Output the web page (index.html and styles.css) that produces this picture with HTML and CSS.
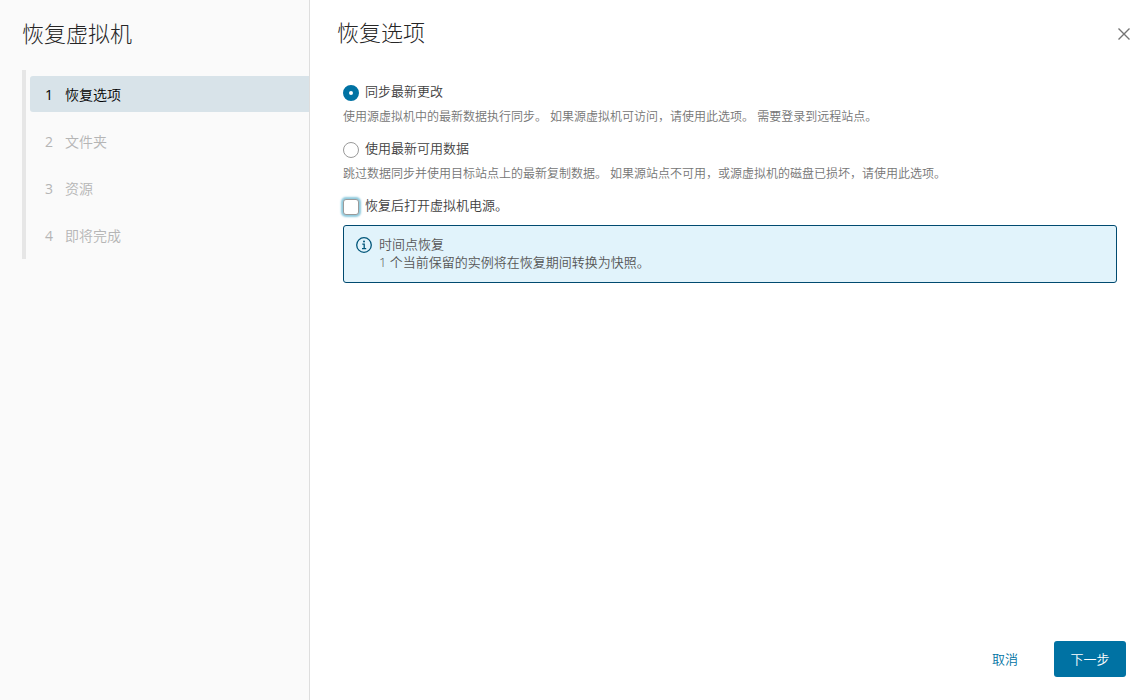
FILE: index.html
```html
<!DOCTYPE html>
<html lang="zh-CN">
<head>
<meta charset="utf-8">
<meta name="viewport" content="width=device-width, initial-scale=1">
<title>恢复虚拟机</title>
<link rel="stylesheet" href="styles.css">
</head>
<body>
<div class="wizard">
  <aside class="sidebar">
    <h1 class="title">恢复虚拟机</h1>
    <ol class="steps">
      <li><button type="button" class="step step-current" aria-current="step"><span class="step-number">1</span>恢复选项</button></li>
      <li><button type="button" class="step" disabled><span class="step-number">2</span>文件夹</button></li>
      <li><button type="button" class="step" disabled><span class="step-number">3</span>资源</button></li>
      <li><button type="button" class="step" disabled><span class="step-number">4</span>即将完成</button></li>
    </ol>
  </aside>
  <main class="content">
    <header class="header">
      <h2 class="title">恢复选项</h2>
      <button type="button" class="close" aria-label="关闭">
        <svg class="close-icon" viewBox="0 0 12 12" aria-hidden="true"><path d="M0.5 0.5L11.5 11.5M11.5 0.5L0.5 11.5"/></svg>
      </button>
    </header>
    <form class="options" id="options">
      <div class="option">
        <input class="control radio" type="radio" name="sync" id="sync-latest" checked>
        <label class="label" for="sync-latest">同步最新更改</label>
      </div>
      <p class="hint">使用源虚拟机中的最新数据执行同步。 如果源虚拟机可访问，请使用此选项。 需要登录到远程站点。</p>
      <div class="option">
        <input class="control radio" type="radio" name="sync" id="use-available">
        <label class="label" for="use-available">使用最新可用数据</label>
      </div>
      <p class="hint">跳过数据同步并使用目标站点上的最新复制数据。 如果源站点不可用，或源虚拟机的磁盘已损坏，请使用此选项。</p>
      <div class="option">
        <input class="control checkbox" type="checkbox" id="power-on">
        <label class="label" for="power-on">恢复后打开虚拟机电源。</label>
      </div>
      <div class="notice">
        <svg class="notice-icon" viewBox="0 0 16 16" aria-hidden="true">
          <circle class="icon-line" cx="8" cy="8" r="7.3"/>
          <circle class="icon-dot" cx="8" cy="4.4" r="1"/>
          <path class="icon-line" d="M6.3 7.2H8.2V11.7M6 11.7H10.2"/>
        </svg>
        <div class="notice-text">
          <p>时间点恢复</p>
          <p>1 个当前保留的实例将在恢复期间转换为快照。</p>
        </div>
      </div>
    </form>
    <footer class="footer">
      <button type="button" class="button button-link">取消</button>
      <button type="submit" form="options" class="button button-primary">下一步</button>
    </footer>
  </main>
</div>
</body>
</html>
```
FILE: styles.css
```css
* {
  box-sizing: border-box;
}

body {
  margin: 0;
  background: #fff;
  color: #404040;
  font-family: "Open Sans", "Noto Sans CJK SC", sans-serif;
  font-size: 13px;
  font-weight: 350;
  line-height: 18px;
}

button {
  margin: 0;
  border: 0;
  background: none;
  font: inherit;
}

p {
  margin: 0;
}

.wizard {
  display: grid;
  grid-template-columns: 310px 1fr;
  min-height: 100vh;
}

.sidebar {
  padding: 16px 0 0 22px;
  border-right: 1px solid #dedede;
  background: #fafafa;
}

.title {
  margin: 0;
  color: #262626;
  font-size: 22px;
  font-weight: 300;
  line-height: 34px;
}

.steps {
  display: grid;
  gap: 11px;
  margin: 20px 0 0;
  padding: 6px 0 6px 4px;
  border-left: 4px solid #e6e6e6;
  list-style: none;
}

.step {
  display: flex;
  align-items: center;
  width: 100%;
  height: 36px;
  padding: 2px 15px 0;
  border-radius: 3px 0 0 3px;
  color: #b5b5b5;
  font-size: 14px;
}

.step-current {
  background: #d8e3e9;
  color: #000;
}

.step-number {
  width: 20px;
  font-weight: 400;
  text-align: left;
}

.content {
  display: flex;
  flex-direction: column;
}

.header {
  display: flex;
  justify-content: space-between;
  padding: 15px 12px 0 27px;
}

.close {
  display: flex;
  align-items: center;
  height: 38px;
  padding: 0 6px;
}

.close-icon {
  width: 12px;
  height: 12px;
  fill: none;
  stroke: #747474;
  stroke-width: 1.4;
}

.options {
  flex: 1;
  padding: 29px 31px 24px 33px;
}

.option {
  display: flex;
  align-items: flex-start;
  gap: 6px;
}

.control {
  flex: none;
  width: 16px;
  height: 16px;
  margin: 3px 0 0;
  border: 1px solid #9a9a9a;
  background: #fff;
  appearance: none;
}

.radio {
  border-radius: 50%;
}

.radio:checked {
  border: 6px solid #0072a3;
}

.checkbox {
  border-radius: 3px;
  box-shadow: 0 0 2px 2px #8fcadd;
}

.hint {
  margin: 7px 0 13px;
  color: #757575;
  font-size: 12px;
}

.notice {
  display: flex;
  gap: 7px;
  margin-top: 10px;
  padding: 9px 12px 11px;
  border: 1px solid #004a70;
  border-radius: 3px;
  background: #e1f3fb;
  color: #565656;
}

.notice-icon {
  flex: none;
  width: 16px;
  height: 16px;
  margin-top: 2px;
}

.icon-line {
  fill: none;
  stroke: #00567a;
  stroke-width: 1.3;
}

.icon-dot {
  fill: #00567a;
}

.footer {
  display: flex;
  justify-content: flex-end;
  gap: 20px;
  padding: 0 22px 23px;
}

.button {
  height: 36px;
  padding: 0 16px;
  border-radius: 3px;
}

.button-link {
  color: #0072a3;
}

.button-primary {
  min-width: 72px;
  background: #0072a3;
  color: #fff;
}
```
